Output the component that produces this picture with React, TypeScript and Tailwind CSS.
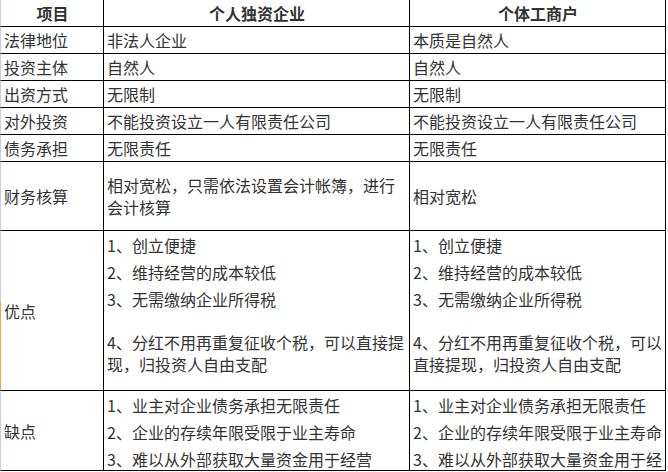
import type { ReactNode } from 'react'

const simpleRows: [string, string, string][] = [
  ['法律地位', '非法人企业', '本质是自然人'],
  ['投资主体', '自然人', '自然人'],
  ['出资方式', '无限制', '无限制'],
  ['对外投资', '不能投资设立一人有限责任公司', '不能投资设立一人有限责任公司'],
  ['债务承担', '无限责任', '无限责任'],
]

const pros = ['1、创立便捷', '2、维持经营的成本较低', '3、无需缴纳企业所得税']
const prosLast = '4、分红不用再重复征收个税，可以直接提现，归投资人自由支配'
const cons = [
  '1、业主对企业债务承担无限责任',
  '2、企业的存续年限受限于业主寿命',
  '3、难以从外部获取大量资金用于经营',
]

const grid = 'grid grid-cols-[104px_306px_256px]'

function Cell({
  children,
  first,
  className = '',
}: {
  children: ReactNode
  first?: boolean
  className?: string
}) {
  return (
    <div
      className={`relative border-r border-b border-black pl-[3px] pr-[2px] ${
        first ? 'border-l border-l-[#c5cfe0]' : ''
      } ${className}`}
    >
      {children}
    </div>
  )
}

function ProsList() {
  return (
    <div className="pt-[3px]">
      {pros.map((p) => (
        <p key={p} className="mb-[5px]">
          {p}
        </p>
      ))}
      <p className="mt-[21px]">{prosLast}</p>
    </div>
  )
}

function ConsList() {
  return (
    <div className="pt-[3px]">
      {cons.map((c) => (
        <p key={c} className="mb-[5px]">
          {c}
        </p>
      ))}
    </div>
  )
}

export default function App() {
  return (
    <div className="h-[472px] w-[668px] overflow-hidden bg-white font-['Noto_Sans_CJK_SC','Microsoft_YaHei',sans-serif] text-[16px] leading-[22px] text-[#333]">
      {/* header */}
      <div className={`${grid} h-[27px] font-bold`}>
        <Cell first className="flex items-center justify-center">
          项目
        </Cell>
        <Cell className="flex items-center justify-center">个人独资企业</Cell>
        <Cell className="flex items-center justify-center">个体工商户</Cell>
      </div>

      {simpleRows.map(([label, a, b]) => (
        <div key={label} className={`${grid} h-[27px]`}>
          <Cell first className="flex items-center">
            {label}
          </Cell>
          <Cell className="flex items-center">{a}</Cell>
          <Cell className="flex items-center">{b}</Cell>
        </div>
      ))}

      <div className={`${grid} h-[69px]`}>
        <Cell first className="flex items-center">
          财务核算
        </Cell>
        <Cell className="flex items-center">
          相对宽松，只需依法设置会计帐簿，进行会计核算
        </Cell>
        <Cell className="flex items-center">相对宽松</Cell>
      </div>

      <div className={`${grid} h-[160px]`}>
        <Cell first className="flex items-center">
          <span className="absolute top-[71px] left-[-1px] h-[88px] w-[1px] bg-[#f2a545]" />
          优点
        </Cell>
        <Cell>
          <ProsList />
        </Cell>
        <Cell>
          <ProsList />
        </Cell>
      </div>

      <div className={`${grid} h-[80px] overflow-hidden`}>
        <Cell first className="flex items-center">
          缺点
        </Cell>
        <Cell className="overflow-hidden">
          <ConsList />
        </Cell>
        <Cell className="overflow-hidden">
          <ConsList />
        </Cell>
      </div>
    </div>
  )
}
